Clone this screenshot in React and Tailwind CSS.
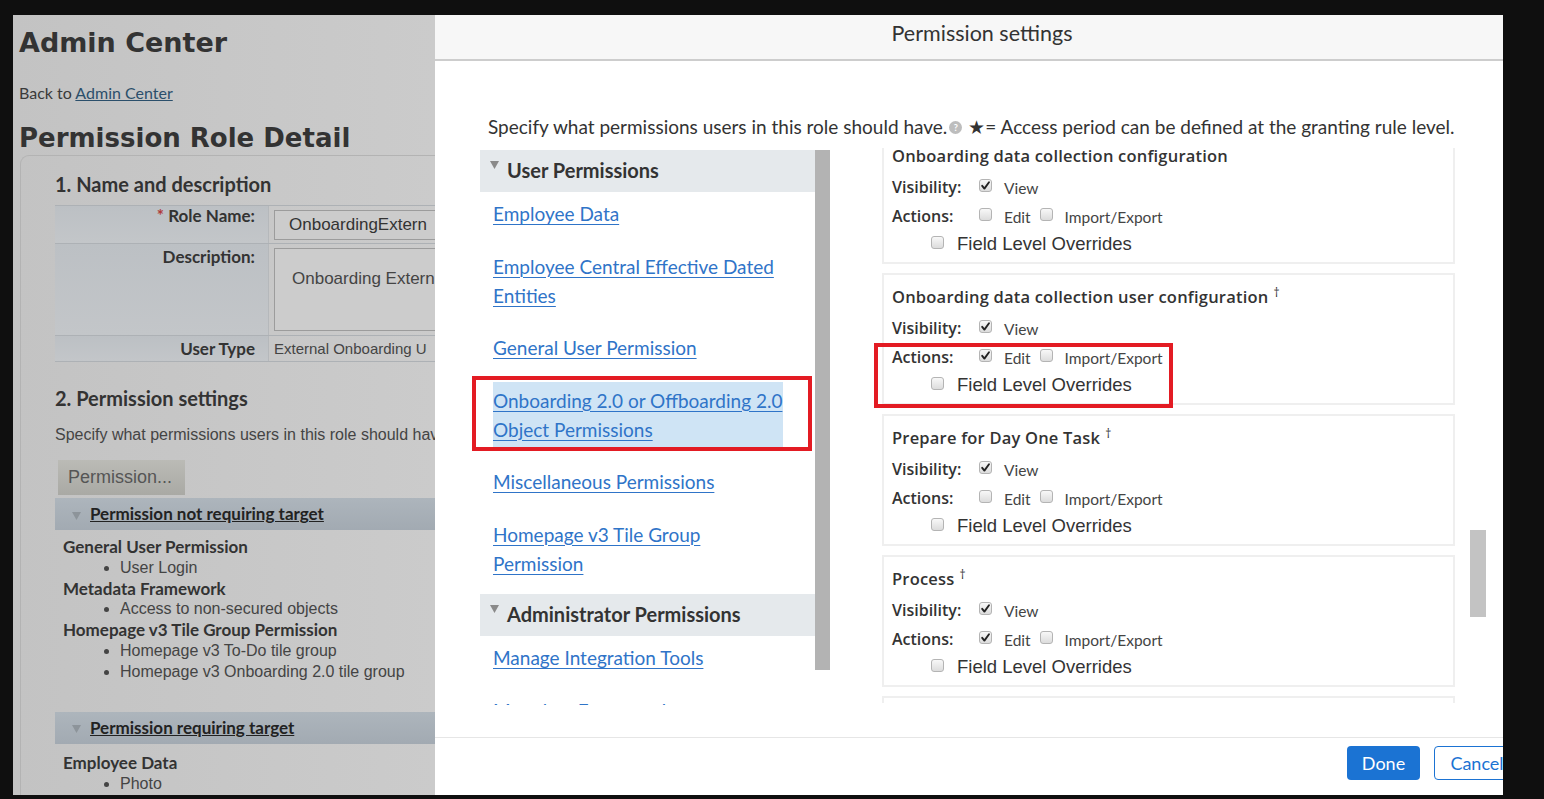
import React from "react";

const Check = () => (
  <svg width="11" height="11" viewBox="0 0 11 11">
    <path d="M2.2 5.8 L4.4 8.6 L9 2.2" fill="none" stroke="#222" strokeWidth="1.9" strokeLinecap="round" strokeLinejoin="round" />
  </svg>
);

function Cb({ checked }) {
  return (
    <span className="inline-flex h-[13px] w-[13px] shrink-0 items-center justify-center rounded-[3px] border border-[#b4b4b4] bg-gradient-to-b from-[#f8f8f8] to-[#dcdcdc]">
      {checked ? <Check /> : null}
    </span>
  );
}

const Tri = ({ color = "#8a8a8a" }) => (
  <svg width="9" height="8" viewBox="0 0 9 8">
    <path d="M0 0 L9 0 L4.5 8 Z" fill={color} />
  </svg>
);

function Card({ title, dagger, edit, annotate, empty }) {
  if (empty) {
    return <div className="h-[132px] shrink-0 border-2 border-[#efefef] bg-white" />;
  }
  return (
    <div className="relative h-[132px] shrink-0 border-2 border-[#efefef] bg-white pl-[8px] pt-[12px] font-['Lato',sans-serif] text-[#333]">
      <div className="whitespace-nowrap font-['Open_Sans',sans-serif] text-[16.5px] font-semibold leading-[20px] tracking-[0.2px] text-[#333]">
        {title}
        {dagger ? <sup className="ml-[5px] text-[12px] font-normal">†</sup> : null}
      </div>
      <div className="mt-[10px] flex h-[22px] items-center">
        <span className="w-[87px] font-['Open_Sans',sans-serif] text-[16px] font-semibold">Visibility:</span>
        <span className="-mt-[3px] flex"><Cb checked /></span>
        <span className="ml-[12px] mt-[4px] text-[15.5px] text-[#444]">View</span>
      </div>
      <div className="mt-[7px] flex h-[22px] items-center">
        <span className="w-[87px] font-['Open_Sans',sans-serif] text-[16px] font-semibold">Actions:</span>
        <span className="-mt-[3px] flex"><Cb checked={edit} /></span>
        <span className="ml-[12px] mt-[4px] text-[15.5px] text-[#444]">Edit</span>
        <span className="-mt-[3px] ml-[9px] flex"><Cb /></span>
        <span className="ml-[12px] mt-[4px] text-[15.5px] text-[#444]">Import/Export</span>
      </div>
      <div className="mt-[6px] flex h-[22px] items-center pl-[39px]">
        <span className="-mt-[3px] flex"><Cb /></span>
        <span className="ml-[13px] font-['Liberation_Sans',sans-serif] text-[18.5px] text-[#333]">Field Level Overrides</span>
      </div>
      {annotate ? (
        <div className="absolute left-[-10px] top-[68px] h-[65px] w-[299px] border-4 border-[#e31b23]" />
      ) : null}
    </div>
  );
}

function NavLink({ lines, highlight, annotate }) {
  const link = (
    <div className="whitespace-nowrap text-[19px] leading-[29px] text-[#2f74c8] underline decoration-1 underline-offset-[3px]">
      {lines.map((l, i) => (
        <div key={i}>{l}</div>
      ))}
    </div>
  );
  return (
    <div className="relative pb-[16.5px] pl-[13px] pt-[7px]">
      {highlight ? (
        <div className="-mb-[4px] -mt-[4px] w-[290px] bg-[#cfe4f5] py-[4px]">{link}</div>
      ) : (
        link
      )}
      {annotate ? (
        <div className="absolute left-[-8px] top-[-2.5px] h-[75px] w-[340px] border-4 border-[#e31b23]" />
      ) : null}
    </div>
  );
}

function NavHeader({ children }) {
  return (
    <div className="flex h-[42px] items-start bg-[#e5e9ec] pl-[10px]">
      <span className="mt-[11px] flex">
        <Tri />
      </span>
      <span className="ml-[8px] mt-[8px] text-[20px] font-bold leading-[24px] text-[#333]">{children}</span>
    </div>
  );
}

function LeftPage() {
  return (
    <div className="relative h-[780px] w-[422px] shrink-0 overflow-hidden bg-gradient-to-r from-[#c3c3c3] to-[#cbcbcb] text-[#333]">
      <div className="pl-[6px] pt-[12px] font-['DejaVu_Sans',sans-serif] text-[27px] font-bold leading-[32px] text-[#333]">
        Admin Center
      </div>
      <div className="mt-[24px] pl-[6px] font-['Lato',sans-serif] text-[16px] leading-[20px] text-[#3a3a3a]">
        Back to <span className="text-[#2b4f6b] underline">Admin Center</span>
      </div>
      <div className="mt-[19px] pl-[6px] font-['DejaVu_Sans',sans-serif] text-[26px] font-bold leading-[32px] text-[#333]">
        Permission Role Detail
      </div>
      <div className="ml-[7px] mt-[1px] h-[700px] rounded-tl-[9px] border-l border-t border-[#b3b3b3] pl-[34px] pt-[16px]">
        <div className="font-['Lato',sans-serif] text-[20px] font-bold leading-[24px]">1. Name and description</div>
        <div className="mt-[9px] border-t border-[#adb1b5] font-['Lato',sans-serif]">
          <div className="flex h-[38px] border-b border-[#adb1b5]">
            <div className="w-[213px] shrink-0 bg-gradient-to-b from-[#bcc0c4] to-[#c3c6c9] pr-[13px] pt-[0px] text-right text-[17px] font-bold leading-[20px]">
              <span className="text-[#b03a3a]">*</span> Role Name:
            </div>
            <div className="flex-1 border-l border-[#b5b8bb] pl-[5px] pt-[4px]">
              <div className="h-[30px] w-[200px] whitespace-nowrap border border-[#9c9c9c] bg-[#cccccc] pl-[14px] font-['Liberation_Sans',sans-serif] text-[17px] leading-[28px] text-[#333]">
                OnboardingExtern
              </div>
            </div>
          </div>
          <div className="flex h-[92px] border-b border-[#adb1b5]">
            <div className="w-[213px] shrink-0 bg-gradient-to-b from-[#bcc0c4] to-[#c3c6c9] pr-[13px] pt-[3px] text-right text-[17px] font-bold leading-[20px]">
              Description:
            </div>
            <div className="flex-1 border-l border-[#b5b8bb] pl-[5px] pt-[4px]">
              <div className="h-[83px] w-[200px] whitespace-nowrap border border-[#9c9c9c] bg-[#cccccc] pl-[17px] pt-[19px] font-['Liberation_Sans',sans-serif] text-[17px] leading-[22px] text-[#444]">
                Onboarding Extern
              </div>
            </div>
          </div>
          <div className="flex h-[26px] border-b border-[#adb1b5]">
            <div className="w-[213px] shrink-0 bg-gradient-to-b from-[#bcc0c4] to-[#c3c6c9] pr-[13px] pt-[3px] text-right text-[17px] font-bold leading-[20px]">
              User Type
            </div>
            <div className="flex-1 whitespace-nowrap border-l border-[#b5b8bb] pl-[5px] pt-[3px] font-['Liberation_Sans',sans-serif] text-[15px] leading-[20px] text-[#444]">
              External Onboarding U
            </div>
          </div>
        </div>
        <div className="mt-[24px] font-['Lato',sans-serif] text-[20px] font-bold leading-[24px]">2. Permission settings</div>
        <div className="mt-[15px] whitespace-nowrap font-['Liberation_Sans',sans-serif] text-[16px] leading-[20px] text-[#444]">
          Specify what permissions users in this role should hav
        </div>
        <div className="ml-[3px] mt-[15px] flex h-[35px] w-[127px] items-center bg-gradient-to-b from-[#bbbbb6] to-[#a9a9a4] pl-[10px] font-['Liberation_Sans',sans-serif] text-[18px] text-[#555]">
          Permission...
        </div>
        <div className="mt-[3px] flex h-[32px] items-center bg-gradient-to-b from-[#adb5bc] to-[#a2aab2] pl-[17px] font-['Lato',sans-serif]">
          <span className="mt-[3px] flex"><Tri color="#8d949a" /></span>
          <span className="ml-[9px] text-[17px] font-bold text-[#222] underline">Permission not requiring target</span>
        </div>
        <div className="mt-[7px] whitespace-nowrap pl-[8px] text-[17px] leading-[20.8px]">
          <div className="font-['Lato',sans-serif] font-bold">General User Permission</div>
          <ul className="list-disc pl-[57px] font-['Liberation_Sans',sans-serif] text-[16px] text-[#444]">
            <li>User Login</li>
          </ul>
          <div className="font-['Lato',sans-serif] font-bold">Metadata Framework</div>
          <ul className="list-disc pl-[57px] font-['Liberation_Sans',sans-serif] text-[16px] text-[#444]">
            <li>Access to non-secured objects</li>
          </ul>
          <div className="font-['Lato',sans-serif] font-bold">Homepage v3 Tile Group Permission</div>
          <ul className="list-disc pl-[57px] font-['Liberation_Sans',sans-serif] text-[16px] text-[#444]">
            <li>Homepage v3 To-Do tile group</li>
            <li>Homepage v3 Onboarding 2.0 tile group</li>
          </ul>
        </div>
        <div className="mt-[29px] flex h-[32px] items-center bg-gradient-to-b from-[#adb5bc] to-[#a2aab2] pl-[17px] font-['Lato',sans-serif]">
          <span className="mt-[3px] flex"><Tri color="#8d949a" /></span>
          <span className="ml-[9px] text-[17px] font-bold text-[#222] underline">Permission requiring target</span>
        </div>
        <div className="mt-[8px] pl-[8px] text-[17px] leading-[21px]">
          <div className="font-['Lato',sans-serif] font-bold">Employee Data</div>
          <ul className="list-disc pl-[57px] font-['Liberation_Sans',sans-serif] text-[16px] text-[#444]">
            <li>Photo</li>
          </ul>
        </div>
      </div>
    </div>
  );
}

function Modal() {
  return (
    <div className="flex h-[780px] w-[1068px] shrink-0 flex-col overflow-hidden bg-white font-['Lato',sans-serif] text-[#333]">
      <div className="h-[46px] shrink-0 border-b-2 border-[#cdcdcd] bg-[#f7f7f7] pl-[26px] pt-[5px] text-center text-[21.5px] leading-[26px] text-[#333]">
        Permission settings
      </div>
      <div className="flex h-[676px] shrink-0 flex-col">
        <div className="flex items-center whitespace-nowrap pl-[53px] pt-[56px] text-[19px] leading-[20px] text-[#333]">
          Specify what permissions users in this role should have.
          <span className="ml-[2px] inline-flex h-[13px] w-[13px] items-center justify-center rounded-full bg-[#bdbdbd] text-[9px] font-bold leading-none text-white">?</span>
          <span className="ml-[6px]">★= Access period can be defined at the granting rule level.</span>
        </div>
        <div className="mt-[11px] flex pl-[45px]">
          <div className="mt-[2px] flex w-[350px] shrink-0">
            <div className="h-[555px] w-[335px] shrink-0 [clip-path:inset(0px_-30px_0px_-30px)]">
              <NavHeader>User Permissions</NavHeader>
              <NavLink lines={["Employee Data"]} />
              <NavLink lines={["Employee Central Effective Dated", "Entities"]} />
              <NavLink lines={["General User Permission"]} />
              <NavLink lines={["Onboarding 2.0 or Offboarding 2.0", "Object Permissions"]} highlight annotate />
              <NavLink lines={["Miscellaneous Permissions"]} />
              <NavLink lines={["Homepage v3 Tile Group", "Permission"]} />
              <NavHeader>Administrator Permissions</NavHeader>
              <NavLink lines={["Manage Integration Tools"]} />
              <NavLink lines={["Metadata Framework"]} />
            </div>
            <div className="h-[520px] w-[15px] shrink-0 bg-[#b3b3b3]" />
          </div>
          <div className="ml-[52px] h-[555px] w-[573px] shrink-0 [clip-path:inset(0px_-30px_0px_-30px)]">
            <div className="-mt-[16px] flex flex-col gap-[9px]">
              <Card title="Onboarding data collection configuration" />
              <Card title="Onboarding data collection user configuration" dagger edit annotate />
              <Card title="Prepare for Day One Task" dagger />
              <Card title="Process" dagger edit />
              <Card empty />
            </div>
          </div>
          <div className="ml-[15px] mt-[382px] h-[87px] w-[16px] shrink-0 bg-[#c3c3c3]" />
        </div>
      </div>
      <div className="flex h-[58px] shrink-0 border-t border-[#e6e6e6] pl-[912px] pt-[8px]">
        <div className="flex h-[34px] w-[73px] shrink-0 items-center justify-center rounded-[4px] bg-[#1b73d3] text-[18px] text-white">
          Done
        </div>
        <div className="ml-[14px] flex h-[34px] w-[86px] shrink-0 items-center justify-center rounded-[4px] border border-[#1b73d3] bg-white text-[18px] text-[#1b73d3]">
          Cancel
        </div>
      </div>
    </div>
  );
}

export default function App() {
  return (
    <div className="flex h-[799px] w-[1544px] overflow-hidden bg-[#0f0f0f] pl-[13px] pt-[15px]">
      <LeftPage />
      <Modal />
    </div>
  );
}
